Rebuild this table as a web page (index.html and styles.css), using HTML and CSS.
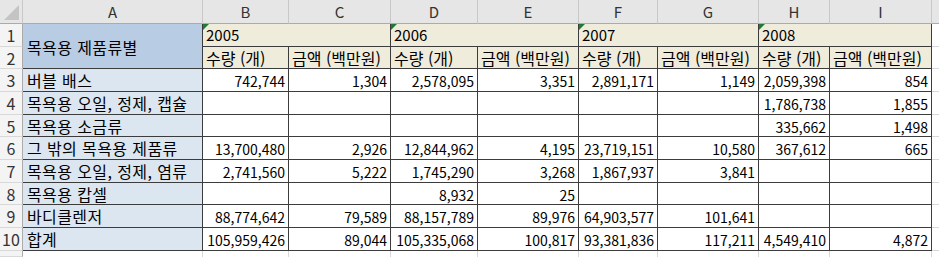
FILE: index.html
```html
<!DOCTYPE html>
<html lang="ko">
<head>
    <meta charset="UTF-8">
    <title>목욕용 제품류별</title>
    <link rel="stylesheet" href="styles.css">
</head>
<body>
<div class="sheet">
    <!-- column headers -->
    <div class="corner"><span class="corner-tri"></span></div>
    <div class="col-head">A</div>
    <div class="col-head">B</div>
    <div class="col-head">C</div>
    <div class="col-head">D</div>
    <div class="col-head">E</div>
    <div class="col-head">F</div>
    <div class="col-head">G</div>
    <div class="col-head">H</div>
    <div class="col-head">I</div>
    <div class="col-head last"></div>

    <!-- row 1 -->
    <div class="row-head">1</div>
    <div class="cell title">목욕용 제품류별</div>
    <div class="cell year"><span class="flag"></span>2005</div>
    <div class="cell year"><span class="flag"></span>2006</div>
    <div class="cell year"><span class="flag"></span>2007</div>
    <div class="cell year"><span class="flag"></span>2008</div>
    <div class="cell blank"></div>

    <!-- row 2 -->
    <div class="row-head">2</div>
    <div class="cell sub">수량 (개)</div>
    <div class="cell sub">금액 (백만원)</div>
    <div class="cell sub">수량 (개)</div>
    <div class="cell sub">금액 (백만원)</div>
    <div class="cell sub">수량 (개)</div>
    <div class="cell sub">금액 (백만원)</div>
    <div class="cell sub">수량 (개)</div>
    <div class="cell sub">금액 (백만원)</div>
    <div class="cell blank"></div>

    <!-- row 3 -->
    <div class="row-head">3</div>
    <div class="cell name">버블 배스</div>
    <div class="cell num">742,744</div>
    <div class="cell num">1,304</div>
    <div class="cell num">2,578,095</div>
    <div class="cell num">3,351</div>
    <div class="cell num">2,891,171</div>
    <div class="cell num">1,149</div>
    <div class="cell num">2,059,398</div>
    <div class="cell num">854</div>
    <div class="cell blank"></div>

    <!-- row 4 -->
    <div class="row-head">4</div>
    <div class="cell name">목욕용 오일, 정제, 캡슐</div>
    <div class="cell num"></div>
    <div class="cell num"></div>
    <div class="cell num"></div>
    <div class="cell num"></div>
    <div class="cell num"></div>
    <div class="cell num"></div>
    <div class="cell num">1,786,738</div>
    <div class="cell num">1,855</div>
    <div class="cell blank"></div>

    <!-- row 5 -->
    <div class="row-head">5</div>
    <div class="cell name">목욕용 소금류</div>
    <div class="cell num"></div>
    <div class="cell num"></div>
    <div class="cell num"></div>
    <div class="cell num"></div>
    <div class="cell num"></div>
    <div class="cell num"></div>
    <div class="cell num">335,662</div>
    <div class="cell num">1,498</div>
    <div class="cell blank"></div>

    <!-- row 6 -->
    <div class="row-head">6</div>
    <div class="cell name">그 밖의 목욕용 제품류</div>
    <div class="cell num">13,700,480</div>
    <div class="cell num">2,926</div>
    <div class="cell num">12,844,962</div>
    <div class="cell num">4,195</div>
    <div class="cell num">23,719,151</div>
    <div class="cell num">10,580</div>
    <div class="cell num">367,612</div>
    <div class="cell num">665</div>
    <div class="cell blank"></div>

    <!-- row 7 -->
    <div class="row-head">7</div>
    <div class="cell name">목욕용 오일, 정제, 염류</div>
    <div class="cell num">2,741,560</div>
    <div class="cell num">5,222</div>
    <div class="cell num">1,745,290</div>
    <div class="cell num">3,268</div>
    <div class="cell num">1,867,937</div>
    <div class="cell num">3,841</div>
    <div class="cell num"></div>
    <div class="cell num"></div>
    <div class="cell blank"></div>

    <!-- row 8 -->
    <div class="row-head">8</div>
    <div class="cell name">목욕용 캅셀</div>
    <div class="cell num"></div>
    <div class="cell num"></div>
    <div class="cell num">8,932</div>
    <div class="cell num">25</div>
    <div class="cell num"></div>
    <div class="cell num"></div>
    <div class="cell num"></div>
    <div class="cell num"></div>
    <div class="cell blank"></div>

    <!-- row 9 -->
    <div class="row-head">9</div>
    <div class="cell name">바디클렌저</div>
    <div class="cell num">88,774,642</div>
    <div class="cell num">79,589</div>
    <div class="cell num">88,157,789</div>
    <div class="cell num">89,976</div>
    <div class="cell num">64,903,577</div>
    <div class="cell num">101,641</div>
    <div class="cell num"></div>
    <div class="cell num"></div>
    <div class="cell blank"></div>

    <!-- row 10 -->
    <div class="row-head">10</div>
    <div class="cell name">합계</div>
    <div class="cell num">105,959,426</div>
    <div class="cell num">89,044</div>
    <div class="cell num">105,335,068</div>
    <div class="cell num">100,817</div>
    <div class="cell num">93,381,836</div>
    <div class="cell num">117,211</div>
    <div class="cell num">4,549,410</div>
    <div class="cell num">4,872</div>
    <div class="cell blank"></div>

    <!-- row 11 (cut off) -->
    <div class="row-head"></div>
    <div class="cell empty"></div>
    <div class="cell empty"></div>
    <div class="cell empty"></div>
    <div class="cell empty"></div>
    <div class="cell empty"></div>
    <div class="cell empty"></div>
    <div class="cell empty"></div>
    <div class="cell empty"></div>
    <div class="cell empty"></div>
    <div class="cell empty"></div>
</div>
</body>
</html>
```

FILE: styles.css
```css
html, body {
    height: 257px;
}

body {
    margin: 0;
    background-color: #fff;
    font-family: "Noto Sans CJK KR", "Noto Sans", sans-serif;
    overflow: hidden;
}

.sheet {
    display: grid;
    grid-template-columns: 23px 180px 86px 102px 87px 101px 79px 101px 71px 102px 20px;
    grid-template-rows: 24px 23px 22px 23px 23px 22px 23px 23px 22px 23px 23px 6px;
    font-size: 15px;
    color: #000;
}

.sheet > div {
    box-sizing: border-box;
    white-space: nowrap;
    overflow: hidden;
    line-height: 20px;
}

.corner {
    position: relative;
    background-color: #e6e6e6;
    border-right: 1px solid #c8c8c8;
    border-bottom: 1px solid #ababab;
}

.corner-tri {
    position: absolute;
    right: 3px;
    bottom: 3px;
    width: 0;
    height: 0;
    border-left: 15px solid transparent;
    border-bottom: 15px solid #c4c4c4;
}

.col-head {
    background-color: #e6e6e6;
    border-right: 1px solid #c8c8c8;
    border-bottom: 1px solid #ababab;
    text-align: center;
    color: #333;
    padding-top: 2px;
}

.col-head.last {
    border-right: none;
}

.row-head {
    background-color: #f4f4f4;
    border-right: 1px solid #ababab;
    border-bottom: 1px solid #d8d8d8;
    text-align: center;
    color: #333;
    font-size: 16px;
    padding-top: 1px;
}

.cell {
    border-right: 1px solid #3c3c3c;
    border-bottom: 1px solid #3c3c3c;
    padding: 1px 3px 0 3px;
}

.title {
    grid-row: span 2;
    background-color: #b8cce4;
    display: flex;
    align-items: center;
    padding-left: 4px;
    font-size: 16px;
    letter-spacing: 0.4px;
}

.year {
    grid-column: span 2;
    position: relative;
    background-color: #f0ecdc;
}

.flag {
    position: absolute;
    left: 0;
    top: 0;
    width: 0;
    height: 0;
    border-top: 6px solid #1e7b34;
    border-right: 6px solid transparent;
}

.sub {
    background-color: #f0ecdc;
    font-size: 16px;
}

.name {
    background-color: #dce6f1;
    padding-left: 4px;
    font-size: 16px;
    letter-spacing: 0.4px;
}

.num {
    text-align: right;
    background-color: #fff;
    font-size: 14px;
    padding-top: 2px;
}

.blank {
    border-right: none;
    border-bottom: 1px solid #d8d8d8;
}

.empty {
    border-right: 1px solid #d8d8d8;
    border-bottom: none;
}
```
